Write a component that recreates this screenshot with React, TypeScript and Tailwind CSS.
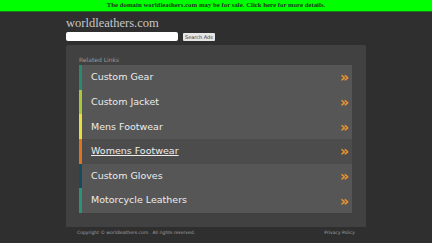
const links = [
  { label: 'Custom Gear', bar: 'bg-[#2a8a70]', active: false },
  { label: 'Custom Jacket', bar: 'bg-[#a8c83a]', active: false },
  { label: 'Mens Footwear', bar: 'bg-[#e8e03a]', active: false },
  { label: 'Womens Footwear', bar: 'bg-[#e0741e]', active: true },
  { label: 'Custom Gloves', bar: 'bg-[#174a5e]', active: false },
  { label: 'Motorcycle Leathers', bar: 'bg-[#2a9478]', active: false },
];

export default function App() {
  return (
    <div className="w-[432px] h-[243px] bg-[#2f2f2f] overflow-hidden">
      {/* Sale banner */}
      <div className="h-[12px] bg-[#00ff00] border-b border-[#1a7a1a] flex items-center justify-center">
        <span className="text-[6.8px] font-bold text-[#1f3a1f] leading-none" style={{ fontFamily: '"Liberation Serif", serif' }}>
          The domain worldleathers.com may be for sale. Click here for more details.
        </span>
      </div>

      <div className="w-[300px] mx-auto">
        {/* Header */}
        <div className="pt-[3px] text-[12.5px] leading-[16px] text-[#c8c8c8]" style={{ fontFamily: '"Liberation Serif", serif' }}>
          worldleathers.com
        </div>
        <div className="flex items-center gap-[5px] mt-[1px]" style={{ fontFamily: '"DejaVu Sans", sans-serif' }}>
          <div className="w-[112px] h-[9px] bg-white rounded-[2px]" />
          <div className="h-[8px] px-[2px] bg-[#e6e6e6] rounded-[1px] text-[5px] leading-[8px] text-[#333]">Search Ads</div>
        </div>

        {/* Panel */}
        <div className="mt-[4px] h-[182px] bg-[#414141] rounded-t-[2px] pl-[13px] pr-[14px] pt-[10px]" style={{ fontFamily: '"DejaVu Sans", sans-serif' }}>
          <div className="text-[6px] leading-[9px] text-[#9a9a9a] mb-[1px]">Related Links</div>
          <div className="flex flex-col">
            {links.map((l) => (
              <div key={l.label} className={`flex h-[24.67px] ${l.active ? 'bg-[#4c4c4c]' : 'bg-[#565656]'}`}>
                <div className={`w-[3px] ${l.bar}`} />
                <div className="flex-1 flex items-center justify-between pl-[9px] pr-[3px]">
                  <span className={`text-[9.5px] text-[#ececec] ${l.active ? 'underline' : ''}`}>{l.label}</span>
                  <span className="text-[14px] font-bold text-[#e8952c] leading-none">»</span>
                </div>
              </div>
            ))}
          </div>
        </div>

        {/* Footer */}
        <div className="flex justify-between px-[11px] pt-[3px] text-[4.5px] text-[#a0a0a0]" style={{ fontFamily: '"DejaVu Sans", sans-serif' }}>
          <span>Copyright © worldleathers.com.&nbsp; All rights reserved.</span>
          <span>Privacy Policy</span>
        </div>
      </div>
    </div>
  );
}
